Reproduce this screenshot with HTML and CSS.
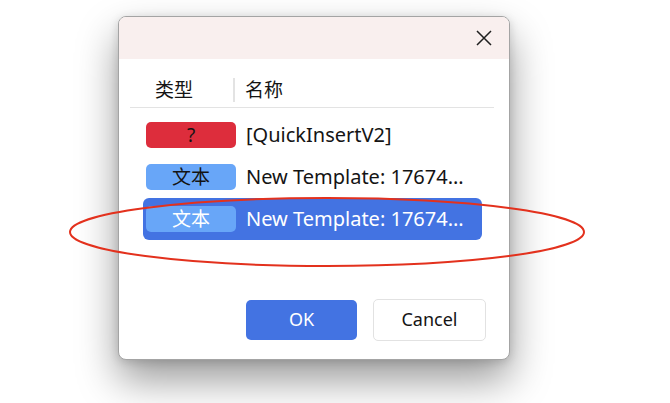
FILE: index.html
```html
<!DOCTYPE html>
<html lang="zh">

<head>
    <meta charset="UTF-8">
    <meta name="viewport" content="width=device-width, initial-scale=1.0">
    <title>选择模板</title>

    <link rel="stylesheet" href="styles.css">
</head>

<body>
    <div class="dialog">
        <div class="titlebar">
            <svg class="close-icon" width="16" height="16" viewBox="0 0 16 16">
                <path d="M1 1 L15 15 M15 1 L1 15" stroke="#1f1f1f" stroke-width="1.5" fill="none" />
            </svg>
        </div>

        <div class="content">
            <div class="table-head">
                <div class="col-type">类型</div>
                <div class="col-name">名称</div>
            </div>

            <div class="rows">
                <div class="row">
                    <span class="badge badge-unknown">?</span>
                    <span class="row-name">[QuickInsertV2]</span>
                </div>
                <div class="row">
                    <span class="badge badge-text">文本</span>
                    <span class="row-name">New Template: 17674...</span>
                </div>
                <div class="row row-selected">
                    <span class="badge badge-text">文本</span>
                    <span class="row-name">New Template: 17674...</span>
                </div>
            </div>
        </div>

        <div class="footer">
            <button class="btn btn-ok">OK</button>
            <button class="btn btn-cancel">Cancel</button>
        </div>
    </div>

    <!-- marca vermelha desenhada por cima -->
    <svg class="mark" width="670" height="403" viewBox="0 0 670 403">
        <ellipse cx="327" cy="232" rx="257" ry="34" stroke="#e3311d" stroke-width="2" fill="none" />
    </svg>
</body>

</html>
```

FILE: styles.css
```css
html {
    background: #ffffff;
}

body {
    margin: 0;
    padding: 16px 0 0 118px;
    height: 403px;
    box-sizing: border-box;
    font-family: 'Noto Sans', 'Noto Sans CJK SC', sans-serif;
    color: #141414;
}

.dialog {
    position: relative;
    width: 392px;
    height: 344px;
    box-sizing: border-box;
    border: 1px solid #a4a4a4;
    border-radius: 8px;
    background: #ffffff;
    box-shadow: 0 20px 40px rgba(0, 0, 0, 0.4), 0 2px 10px rgba(0, 0, 0, 0.14);
    display: flex;
    flex-direction: column;
}

.titlebar {
    height: 42px;
    flex-shrink: 0;
    background: #f9efee;
    border-radius: 7px 7px 0 0;
    display: flex;
    justify-content: flex-end;
    align-items: center;
    padding-right: 17px;
}

.content {
    padding: 13px 15px 0 11px;
}

.table-head {
    height: 35px;
    display: flex;
    align-items: center;
    border-bottom: 1px solid #e3e3e3;
    font-size: 19px;
    line-height: 24px;
}

.col-type {
    width: 78px;
    padding-left: 25px;
}

.col-name {
    border-left: 2px solid #e3e3e3;
    padding-left: 10px;
    height: 24px;
}

.rows {
    margin: 6px 12px 0 13px;
}

.row {
    height: 42px;
    display: flex;
    align-items: center;
    gap: 10px;
    padding-left: 3px;
    border-radius: 6px;
    font-size: 20px;
    line-height: 26px;
}

.row-selected {
    background: #4373e2;
    color: #ffffff;
}

.badge {
    width: 90px;
    height: 26px;
    line-height: 26px;
    border-radius: 5px;
    text-align: center;
    font-size: 19px;
}

.badge-unknown {
    background: #dd2d3c;
    color: #141414;
}

.badge-text {
    background: #68a6f8;
    color: #141414;
}

.row-selected .badge-text {
    color: #ffffff;
}

.footer {
    margin-top: auto;
    display: flex;
    justify-content: flex-end;
    align-items: center;
    gap: 16px;
    padding: 0 23px 18px 0;
}

.btn {
    height: 41px;
    border-radius: 5px;
    font-family: 'Noto Sans', 'Noto Sans CJK SC', sans-serif;
    font-size: 18px;
    line-height: 20px;
    padding: 0 0 3px;
}

.btn-ok {
    width: 111px;
    height: 40px;
    background: #4373e2;
    color: #ffffff;
    border: none;
}

.btn-cancel {
    width: 113px;
    height: 42px;
    background: #ffffff;
    color: #141414;
    border: 1px solid #e2e2e2;
}

.mark {
    position: absolute;
    left: 0;
    top: 0;
    pointer-events: none;
}
```
